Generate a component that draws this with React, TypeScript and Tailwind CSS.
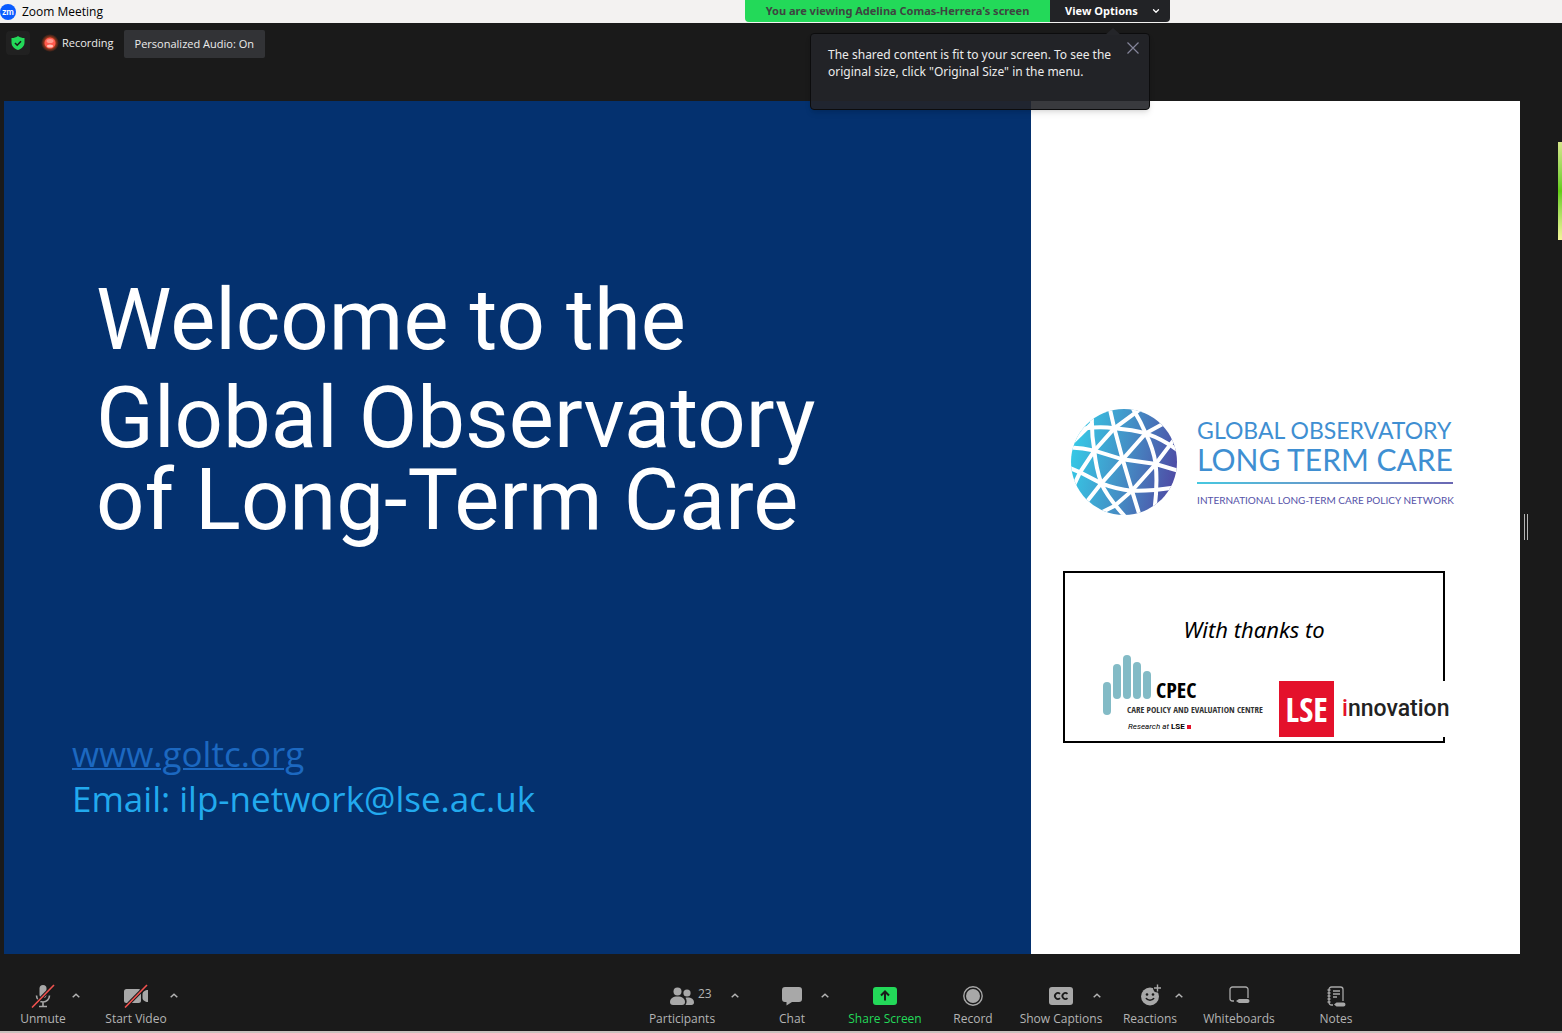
import type { ReactNode } from "react";
import { ChevronDown } from "lucide-react";

interface ToolItem {
  label: string;
  width: string;
  icon: ReactNode;
  menu?: boolean;
  count?: number;
  active?: boolean;
}

const MicIcon = () => (
  <svg width="24" height="24" viewBox="0 0 24 24" fill="none">
    <rect x="8.5" y="1" width="7" height="13" rx="3.5" fill="#a8a8a8" />
    <path
      d="M5.5 11.5a6.5 6.5 0 0 0 13 0M12 18v4M8 22.5h8"
      stroke="#a8a8a8"
      strokeWidth="1.6"
    />
    <path d="M1 23.5 23 1" stroke="#1a1a1a" strokeWidth="3.5" />
    <path d="M1 23.5 23 1" stroke="#f0524f" strokeWidth="1.6" />
  </svg>
);

const VideoIcon = () => (
  <svg width="26" height="24" viewBox="0 0 26 24" fill="none">
    <rect x="1" y="5" width="17" height="14" rx="2.5" fill="#a8a8a8" />
    <path d="M19.5 10c0-2 2.5-4 5.5-4v12c-3 0-5.5-2-5.5-4z" fill="#a8a8a8" />
    <path d="M2 23.5 24 1" stroke="#1a1a1a" strokeWidth="3.5" />
    <path d="M2 23.5 24 1" stroke="#f0524f" strokeWidth="1.6" />
  </svg>
);

const PeopleIcon = () => (
  <svg width="24" height="24" viewBox="0 0 24 24" fill="#a8a8a8">
    <circle cx="7.5" cy="7.5" r="4" />
    <circle cx="17" cy="9" r="3.6" />
    <path d="M0 18c0-3.5 3-5.5 7.5-5.5s7.5 2 7.5 5.5c0 2-1 3-3 3H3c-2 0-3-1-3-3z" />
    <path d="M15.5 13.8c5-.8 8.5 1.2 8.5 4.7 0 1.5-1 2.5-2.5 2.5h-6c1.5-2 1.5-5 0-7.2z" />
  </svg>
);

const ChatIcon = () => (
  <svg width="24" height="24" viewBox="0 0 24 24" fill="#a8a8a8">
    <path d="M5 3h14a3 3 0 0 1 3 3v9a3 3 0 0 1-3 3h-7l-5.5 3.5V18H5a3 3 0 0 1-3-3V6a3 3 0 0 1 3-3z" />
  </svg>
);

const ShareIcon = () => (
  <svg width="24" height="24" viewBox="0 0 24 24" fill="none">
    <rect y="3" width="24" height="18" rx="3" fill="#23d959" />
    <path d="M12 16.5V8M8 11.5l4-4 4 4" stroke="#1a1a1a" strokeWidth="2" />
  </svg>
);

const RecordIcon = () => (
  <svg width="24" height="24" viewBox="0 0 24 24" fill="none">
    <circle cx="12" cy="12" r="9.2" stroke="#a8a8a8" strokeWidth="1.4" />
    <circle cx="12" cy="12" r="7" fill="#a8a8a8" />
  </svg>
);

const CaptionsIcon = () => (
  <svg width="24" height="24" viewBox="0 0 24 24" fill="none">
    <rect y="3" width="24" height="18" rx="3" fill="#a8a8a8" />
    <path
      d="M11 9.8a3 3 0 1 0 0 4.4M18.5 9.8a3 3 0 1 0 0 4.4"
      stroke="#1a1a1a"
      strokeWidth="1.8"
    />
  </svg>
);

const ReactionsIcon = () => (
  <svg width="24" height="24" viewBox="0 0 24 24" fill="none">
    <circle cx="12" cy="12.5" r="9" fill="#a8a8a8" />
    <circle cx="19.5" cy="4" r="4.5" fill="#1a1a1a" />
    <path d="M19.5.5v7M16 4h7" stroke="#a8a8a8" strokeWidth="1.4" />
    <circle cx="9" cy="10.5" r="1.3" fill="#1a1a1a" />
    <circle cx="15" cy="10.5" r="1.3" fill="#1a1a1a" />
    <path d="M8 14c1.5 3 6.5 3 8 0" stroke="#1a1a1a" strokeWidth="1.6" />
  </svg>
);

const WhiteboardIcon = () => (
  <svg width="24" height="24" viewBox="0 0 24 24" fill="none">
    <path
      d="M7 17H5.5A2.5 2.5 0 0 1 3 14.5v-9A2.5 2.5 0 0 1 5.5 3h13A2.5 2.5 0 0 1 21 5.5V14"
      stroke="#a8a8a8"
      strokeWidth="1.3"
    />
    <path d="m9 17 3-2h8.500a2 2 0 0 1 0 4H12z" fill="#a8a8a8" />
  </svg>
);

const NotesIcon = () => (
  <svg width="24" height="24" viewBox="0 0 24 24" fill="none">
    <path
      d="M9 21H7.500A2.500 2.500 0 0 1 5 18.500v-13A2.500 2.500 0 0 1 7.500 3h9A2.500 2.500 0 0 1 19 5.500V17M3.500 6h3M3.500 9h3M3.500 12h3M3.500 15h3M3.500 18h3M9 7h7M9 10h7M9 13h4"
      stroke="#a8a8a8"
      strokeWidth="1.3"
    />
    <path d="m10 20.500 2.500-2h7a2 2 0 0 1 0 4h-7z" fill="#a8a8a8" />
  </svg>
);

const leftTools: ToolItem[] = [
  { label: "Unmute", width: "w-[50px]", icon: <MicIcon />, menu: true },
  { label: "Start Video", width: "w-[60px]", icon: <VideoIcon />, menu: true },
];

const mainTools: ToolItem[] = [
  {
    label: "Participants",
    width: "w-[90px]",
    icon: <PeopleIcon />,
    menu: true,
    count: 23,
  },
  { label: "Chat", width: "w-[50px]", icon: <ChatIcon />, menu: true },
  {
    label: "Share Screen",
    width: "w-[56px]",
    icon: <ShareIcon />,
    active: true,
  },
  { label: "Record", width: "w-[72px]", icon: <RecordIcon /> },
  {
    label: "Show Captions",
    width: "w-[56px]",
    icon: <CaptionsIcon />,
    menu: true,
  },
  { label: "Reactions", width: "w-[42px]", icon: <ReactionsIcon />, menu: true },
  { label: "Whiteboards", width: "w-[56px]", icon: <WhiteboardIcon /> },
  { label: "Notes", width: "w-[90px]", icon: <NotesIcon /> },
];

function Tool({ item }: { item: ToolItem }) {
  return (
    <li className="flex items-start">
      <button
        className={`${item.width} relative flex flex-col items-center gap-[3px] whitespace-nowrap ${
          item.active ? "text-[#23d959]" : "text-[#b4b4b4]"
        }`}
      >
        {item.icon}
        <span>{item.label}</span>
        {item.count && (
          <span className="absolute top-[2px] left-[61px]">{item.count}</span>
        )}
      </button>
      {item.menu && (
        <button
          aria-label={`${item.label} menu`}
          className="flex h-6 w-4 items-center justify-center"
        >
          <svg width="8" height="5" viewBox="0 0 8 5" fill="none">
            <path d="m.7 4.3 3.3-3 3.3 3" stroke="#b4b4b4" strokeWidth="1.5" />
          </svg>
        </button>
      )}
    </li>
  );
}

function TitleBar() {
  return (
    <header className="flex h-[23px] items-start bg-[#f3f2f1]">
      <div className="flex items-center gap-[6px] pt-[3px] text-black">
        <svg width="16" height="16" viewBox="0 0 16 16">
          <circle cx="8" cy="8" r="8" fill="#0b5cff" />
          <text
            x="8"
            y="10.5"
            textAnchor="middle"
            fontSize="9"
            fontWeight="700"
            fontFamily="Lato"
            fill="white"
          >
            zm
          </text>
        </svg>
        <h1 className="pt-px">Zoom Meeting</h1>
      </div>
      <div className="relative mr-[392px] ml-auto flex h-[22px] text-[11px] leading-[22px] font-bold">
        <p className="w-[305px] rounded-bl bg-[#23d959] text-center font-['Noto_Sans'] whitespace-nowrap text-[#3d4540]">
          You are viewing Adelina Comas-Herrera's screen
        </p>
        <button className="flex w-[120px] items-center justify-between rounded-br bg-[#222326] pr-[9px] pl-[15px] text-white">
          View Options
          <ChevronDown size={10} strokeWidth={3} />
        </button>
        <SizeHint />
      </div>
    </header>
  );
}

function SizeHint() {
  return (
    <div className="absolute top-[33px] right-5 z-10 flex h-[77px] w-[340px] items-start rounded border border-[#0c0c0d] bg-[#242529]/90 pt-3 pr-[10px] pl-[17px] font-['Noto_Sans'] text-[12px] leading-[17px] font-normal text-[#ececec] shadow-md">
      <svg
        className="absolute -top-[6px] right-[28px]"
        width="16"
        height="7"
        viewBox="0 0 16 7"
      >
        <path d="M0 7 8 0l8 7z" fill="#242529" />
      </svg>
      <p className="flex-1 whitespace-nowrap">
        The shared content is fit to your screen. To see the
        <br />
        original size, click "Original Size" in the menu.
      </p>
      <button aria-label="Close" className="-mt-1 text-[#85859a]">
        <svg width="12" height="12" viewBox="0 0 12 12" fill="none">
          <path
            d="m.5.5 11 11M11.5.5l-11 11"
            stroke="currentColor"
            strokeWidth="1.2"
          />
        </svg>
      </button>
    </div>
  );
}

function StatusBar() {
  return (
    <div className="flex h-[78px] items-start pt-[7px] pl-[6px] text-[11px] text-[#ececec]">
      <div className="mt-[1px] flex size-6 items-center justify-center rounded bg-[#212121]">
        <svg width="14" height="14" viewBox="0 0 14 14" fill="none">
          <path
            d="M7 0c2 1.5 4 2 6.5 2v4.5c0 3.5-2.5 6-6.5 7.5C3 12.5.5 10 .5 6.5V2C3 2 5 1.5 7 0z"
            fill="#23d959"
          />
          <path d="m4 7 2.2 2.2L10 5.2" stroke="#1a1a1a" strokeWidth="1.6" />
        </svg>
      </div>
      <div className="ml-[11px] flex h-[26px] items-center gap-[3px]">
        <svg width="18" height="18" viewBox="0 0 18 18">
          <defs>
            <radialGradient id="glow">
              <stop offset="50%" stopColor="#c8431c" />
              <stop offset="100%" stopColor="#c8431c" stopOpacity="0" />
            </radialGradient>
          </defs>
          <circle cx="9" cy="9" r="9" fill="url(#glow)" />
          <circle cx="9" cy="9" r="5.5" fill="#ff5a4e" />
          <ellipse cx="9" cy="7" rx="3.5" ry="2" fill="#ff9b90" />
          <ellipse cx="9" cy="12" rx="3" ry="1.5" fill="#ffc2b8" />
        </svg>
        <span>Recording</span>
      </div>
      <button className="ml-[10px] h-[28px] rounded-xs bg-[#323336] px-[11px]">
        Personalized Audio: On
      </button>
    </div>
  );
}

function Globe() {
  return (
    <svg width="106" height="106" viewBox="33 27 318 318" fill="none">
      <defs>
        <linearGradient id="globe" x1="0" y1="0.4" x2="1" y2="0.6">
          <stop offset="0" stopColor="#36c9e6" />
          <stop offset="0.5" stopColor="#4490c6" />
          <stop offset="1" stopColor="#4f4ba5" />
        </linearGradient>
        <clipPath id="disc">
          <circle cx="192" cy="186" r="159" />
        </clipPath>
      </defs>
      <circle cx="192" cy="186" r="159" fill="url(#globe)" />
      <g clipPath="url(#disc)" stroke="white" strokeWidth="12">
        <path d="M30 95 Q100 76 163 85 Q220 90 257 100 Q310 118 355 152" />
        <path d="M20 142 Q62 142 103 152 L188 178 L287 192 L360 214" />
        <path d="M20 200 L60 217 L124 250 Q170 268 216 272 Q260 275 350 262" />
        <path d="M96 50 Q94 100 103 152 Q108 205 124 250 Q140 290 200 355" />
        <path d="M148 20 L163 85 L188 178 L216 272 L240 350" />
        <path d="M215 20 Q240 60 257 100 Q280 145 287 192 Q293 250 284 325" />
        <path d="M240 28 L163 85 L103 152 L60 217 L40 260" />
        <path d="M308 72 L257 100 L188 178 L124 250 L75 312" />
        <path d="M345 115 L287 192 L216 272 L163 318 L115 342" />
        <path d="M40 125 L98 68" />
      </g>
    </svg>
  );
}

function ObservatoryLogo() {
  return (
    <div className="flex items-center gap-5">
      <Globe />
      <div className="font-[Lato] whitespace-nowrap text-[#3f8fd2]">
        <p className="text-[23px] leading-[29px]">GLOBAL OBSERVATORY</p>
        <p className="text-[30px] leading-[29px]">LONG TERM CARE</p>
        <div className="my-2 h-[2px] w-[256px] bg-linear-to-r from-[#45c8e0] to-[#6a67b3]" />
        <p className="text-[10px] leading-[16px] text-[#5552a8]">
          INTERNATIONAL LONG-TERM CARE POLICY NETWORK
        </p>
      </div>
    </div>
  );
}

function CpecLogo() {
  return (
    <div className="flex items-start font-['Open_Sans_Condensed','Roboto_Condensed','Noto_Sans',sans-serif] whitespace-nowrap text-black">
      <svg width="48" height="60" viewBox="0 0 48 60" fill="#83bbc6">
        <rect x="0" y="27" width="8" height="33" rx="4" />
        <rect x="10" y="9" width="8" height="35" rx="4" />
        <rect x="20" y="0" width="8" height="44" rx="4" />
        <rect x="30" y="7" width="8" height="37" rx="4" />
        <rect x="40" y="16" width="8" height="28" rx="4" />
      </svg>
      <div className="-ml-6 pt-[22px]">
        <p className="pl-[29px] text-[22px] leading-[24px] font-bold">CPEC</p>
        <p className="pt-[2px] text-[9px] leading-[14px] text-[#333]">
          CARE POLICY AND EVALUATION CENTRE
        </p>
        <p className="mt-1 flex items-center gap-[2px] pl-px font-[Roboto] text-[8px] leading-[12px]">
          <i>Research at</i>
          <b>LSE</b>
          <span className="size-1 bg-[#e4112b]" />
        </p>
      </div>
    </div>
  );
}

function Thanks() {
  return (
    <div className="mt-14 -ml-2 h-[172px] w-[382px] border-2 border-black pt-10">
      <p className="text-center font-['Noto_Sans'] text-[22px] leading-[32px] text-black italic">
        With thanks to
      </p>
      <div className="flex items-start pl-[38px]">
        <div className="mt-[10px] w-[176px] shrink-0">
          <CpecLogo />
        </div>
        <div className="mt-[36px] flex h-[56px] shrink-0 items-center gap-2 bg-white">
          <div className="flex h-full w-[55px] items-center justify-center bg-[#e4112b] font-['Open_Sans_Condensed'] text-[34px] text-white">
            LSE
          </div>
          <p className="font-[Roboto] text-[23px] leading-[28px] font-medium text-[#222]">
            <span className="text-[#e4112b]">i</span>nnovation
          </p>
        </div>
      </div>
    </div>
  );
}

function Slide() {
  return (
    <main className="flex aspect-video flex-1 bg-white">
      <section className="w-[67.75%] shrink-0 bg-[#04316f]">
        <div className="pt-[178px] pl-[92px] font-[Roboto] text-[85px] leading-[82px] whitespace-nowrap text-white">
          <p>Welcome to the</p>
          <p className="mt-4">
            Global Observatory
            <br />
            of Long-Term Care
          </p>
        </div>
        <div className="mt-[190px] pl-[68px] text-[35px] leading-[45px] text-[#22aaee]">
          <a
            href="http://www.goltc.org"
            className="text-[#1c68c0] underline decoration-2"
          >
            www.goltc.org
          </a>
          <p>Email: ilp-network@lse.ac.uk</p>
        </div>
      </section>
      <section className="flex-1 pt-[308px] pl-10">
        <ObservatoryLogo />
        <Thanks />
      </section>
    </main>
  );
}

function App() {
  return (
    <div className="flex min-h-screen flex-col border-b-2 border-[#c9c1bd] bg-[#1a1a1a] font-['Open_Sans',sans-serif] text-[12px] leading-[16px]">
      <TitleBar />
      <StatusBar />
      <div className="flex pl-1">
        <Slide />
        <aside className="flex w-[42px] items-center justify-between pl-1">
          <div className="h-[26px] w-1 border-x border-[#b5b5b5]" />
          <div className="mt-[41px] h-[98px] w-1 self-start bg-linear-to-b from-[#d5e58a] via-[#62cc10] to-[#f5f59a]" />
        </aside>
      </div>
      <footer className="flex justify-between pt-[30px] pr-[181px] pb-1 pl-[18px]">
        <ul className="flex gap-[22px]">
          {leftTools.map((item) => (
            <Tool key={item.label} item={item} />
          ))}
        </ul>
        <ul className="flex gap-6">
          {mainTools.map((item) => (
            <Tool key={item.label} item={item} />
          ))}
        </ul>
      </footer>
    </div>
  );
}

export default App;
